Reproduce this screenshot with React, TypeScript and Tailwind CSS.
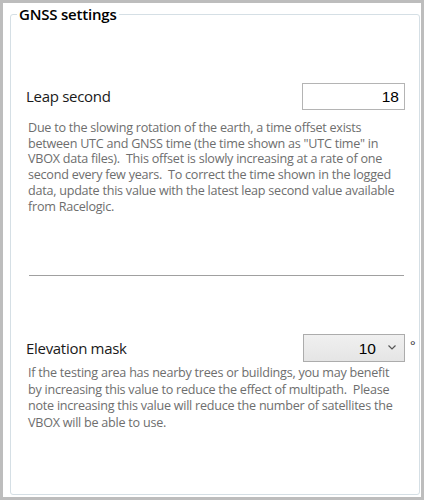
import React from "react";

export default function App() {
  const font = { fontFamily: '"Open Sans", "Noto Sans", sans-serif' };
  return (
    <div className="w-[424px] h-[500px] bg-[#bdbdbd] pt-[3px] pl-[3px] pr-[3px] pb-[3px]" style={font}>
      <div className="w-full h-full bg-white pl-[7px] pt-[11px] pr-[1px] pb-[2px]">
        <div className="relative h-full border border-[#d5dfe5] rounded-[3px] shadow-[inset_1px_1px_0_#ffffff]">
          <div className="absolute left-[6px] top-[-10px] bg-white px-[2px] text-[15px] leading-[18px] font-semibold text-black tracking-[-0.2px]">
            GNSS settings
          </div>
          <div className="pl-[15px] pr-[14px] pt-[68px]">
            <div className="flex items-center justify-between h-[27px]">
              <span className="text-[15px] text-[#1a1a1a] tracking-[-0.3px]">Leap second</span>
              <div className="w-[103px] h-[27px] border border-[#b4b4b4] bg-white flex items-center justify-end pr-[5px] text-[15.5px] text-black" style={{ fontFamily: '"Liberation Sans", Arial, sans-serif' }}>
                18
              </div>
            </div>
            <p className="mt-[10px] pl-[2px] text-[12.6px] leading-[15.7px] text-[#6e6e6e] tracking-[-0.25px]">
              Due to the slowing rotation of the earth, a time offset exists between UTC and GNSS time (the time shown as "UTC time" in VBOX data files).&nbsp; This offset is slowly increasing at a rate of one second every few years.&nbsp; To correct the time shown in the logged data, update this value with the latest leap second value available from Racelogic.
            </p>
            <div className="mt-[61px] ml-[3px] mr-[1px] h-px bg-[#a0a0a0]" />
            <div className="mt-[58px] flex items-center h-[28px]">
              <span className="flex-1 text-[15px] text-[#1a1a1a] tracking-[-0.3px]">Elevation mask</span>
              <div className="relative">
                <div className="w-[102px] h-[28px] border border-[#acacac] bg-gradient-to-b from-[#f0f0f0] to-[#e5e5e5] flex items-center justify-end pr-[8px] text-black">
                  <span className="text-[15.5px] mr-[12px]" style={{ fontFamily: '"Liberation Sans", Arial, sans-serif' }}>10</span>
                  <svg width="8" height="5" viewBox="0 0 8 5" className="mt-[-2px]">
                    <path d="M0.5 0.5 L4 4 L7.5 0.5" fill="none" stroke="#555" strokeWidth="1.2" />
                  </svg>
                </div>
                <span className="absolute left-[107px] top-[2px] text-[13px] text-[#333]">°</span>
              </div>
            </div>
            <p className="mt-[3px] pl-[2px] text-[12.6px] leading-[16.5px] text-[#6e6e6e] tracking-[-0.25px]">
              If the testing area has nearby trees or buildings, you may benefit by increasing this value to reduce the effect of multipath.&nbsp; Please note increasing this value will reduce the number of satellites the VBOX will be able to use.
            </p>
          </div>
        </div>
      </div>
    </div>
  );
}
